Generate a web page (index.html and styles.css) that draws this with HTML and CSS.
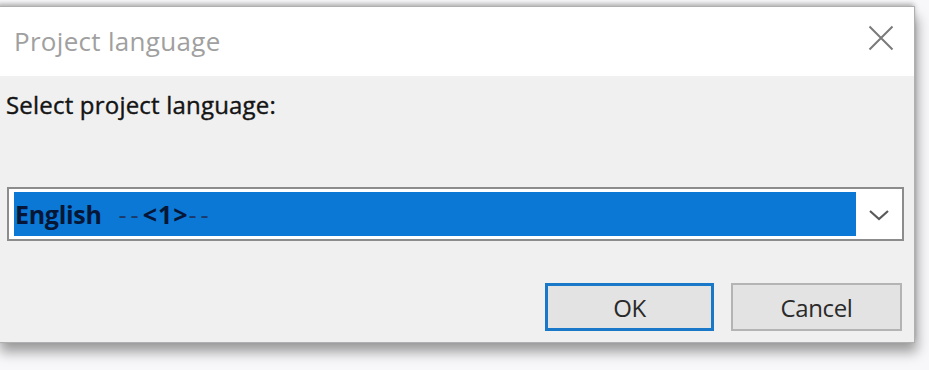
FILE: index.html
```html
<!DOCTYPE html>
<html>
<head>
<meta charset="utf-8">
<link rel="stylesheet" href="styles.css">
</head>
<body>
<div class="dialog">
  <div class="titlebar">
    <span class="title">Project language</span>
    <span class="close">
      <svg width="26" height="26" viewBox="0 0 26 26"><path d="M1.5 1.5 L24.5 24.5 M24.5 1.5 L1.5 24.5" stroke="#7a7a7a" stroke-width="2" fill="none"/></svg>
    </span>
  </div>
  <div class="content">
    <div class="label">Select project language:</div>
    <div class="combo">
      <div class="selected"><span class="lang">English</span><span class="num"><span class="dash">--</span>&lt;1&gt;<span class="dash">--</span></span></div>
      <div class="arrow">
        <svg width="22" height="14" viewBox="0 0 22 14"><path d="M2 3 L11 11 L20 3" stroke="#5a5a5a" stroke-width="2.2" fill="none"/></svg>
      </div>
    </div>
    <div class="buttons">
      <div class="btn btn-default">OK</div>
      <div class="btn">Cancel</div>
    </div>
  </div>
</div>
</body>
</html>
```
FILE: styles.css
```css
html {
  background: #f8f8fa;
}
body {
  margin: 0;
  height: 370px;
  overflow: hidden;
  padding: 7px 0 0 0;
  font-family: "Open Sans", "Noto Sans", "Liberation Sans", sans-serif;
}
* {
  box-sizing: border-box;
}
.dialog {
  margin-left: -3px;
  width: 917px;
  height: 335px;
  background: #f0f0f1;
  box-shadow: 0 0 0 1px #b0b0b0, 0 -3px 5px rgba(0,0,0,0.3), 3px 10px 12px rgba(0,0,0,0.38);
  display: flex;
  flex-direction: column;
}
.titlebar {
  height: 69px;
  background: #ffffff;
  display: flex;
  align-items: center;
  justify-content: space-between;
  padding: 0 20px 0 17px;
  flex-shrink: 0;
}
.title {
  font-size: 26px;
  color: #a0a0a0;
  letter-spacing: 0.3px;
  margin-top: -2px;
}
.close {
  display: flex;
  margin-top: -7px;
}
.content {
  display: flex;
  flex-direction: column;
  padding: 14px 10px 0 9px;
}
.label {
  font-size: 24px;
  line-height: 30px;
  color: #141414;
  letter-spacing: 0.2px;
  -webkit-text-stroke: 0.4px #141414;
}
.combo {
  margin-top: 67px;
  margin-left: 1px;
  height: 54px;
  border: 2px solid #8c8c8c;
  background: #ffffff;
  display: flex;
  align-items: stretch;
  padding: 3px 0 3px 5px;
}
.selected {
  flex: 1;
  background: #0b78d6;
  display: flex;
  align-items: center;
  font-size: 25px;
  font-weight: 700;
  color: #061636;
  padding-left: 1px;
  letter-spacing: -0.3px;
}
.num {
  margin-left: 17px;
  letter-spacing: 1px;
}
.dash {
  font-weight: 400;
  color: #1a3a6a;
  letter-spacing: 4px;
}
.arrow {
  width: 46px;
  display: flex;
  align-items: center;
  justify-content: center;
  padding-top: 2px;
}
.buttons {
  display: flex;
  justify-content: flex-end;
  gap: 17px;
  margin-top: 42px;
  padding-right: 2px;
}
.btn {
  width: 171px;
  height: 48px;
  border: 2px solid #b4b4b4;
  background: #e3e3e3;
  display: flex;
  align-items: center;
  justify-content: center;
  font-size: 24px;
  color: #2a2a2a;
  letter-spacing: -0.4px;
}
.btn-default {
  border: 3px solid #1a78c9;
  width: 169px;
}
```
